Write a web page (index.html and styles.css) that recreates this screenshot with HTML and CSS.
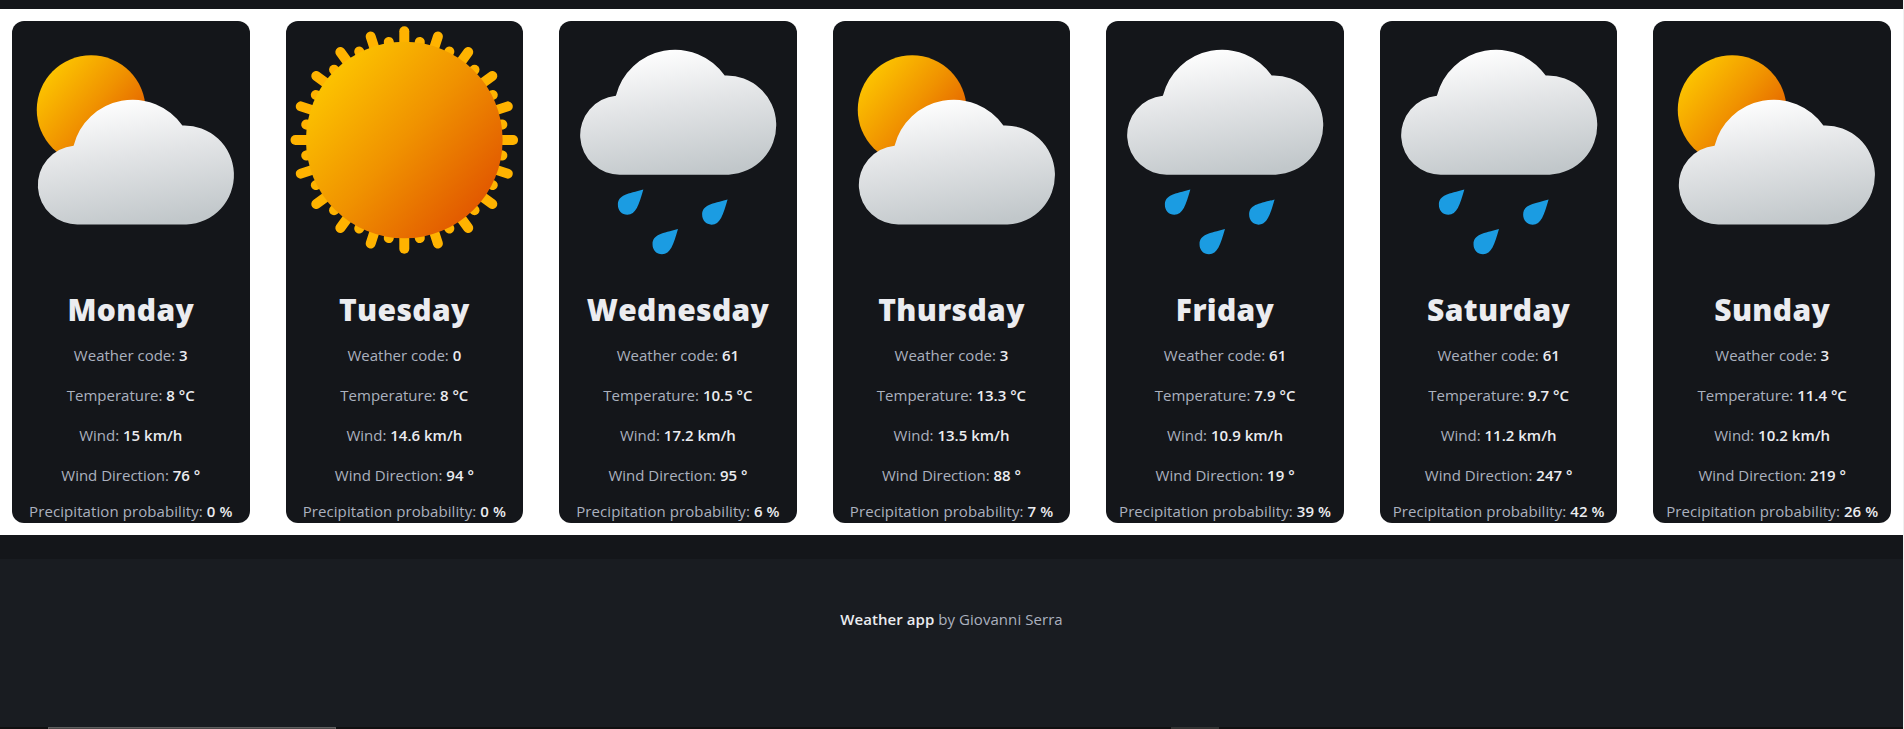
FILE: index.html
```
<!DOCTYPE html>
<html lang="en">
<head>
<meta charset="utf-8">
<title>Weather app</title>
<link rel="stylesheet" href="styles.css">
</head>
<body>
<svg class="defs" aria-hidden="true">
  <defs>
    <linearGradient id="sunFill" x1="0.1" y1="0.2" x2="0.85" y2="0.85"><stop offset="0" stop-color="#fcc200"/><stop offset="0.5" stop-color="#f09200"/><stop offset="1" stop-color="#e25a00"/></linearGradient>
    <linearGradient id="cloudFill" x1="0.35" y1="0" x2="0.6" y2="1"><stop offset="0" stop-color="#ffffff"/><stop offset="0.45" stop-color="#e2e4e6"/><stop offset="1" stop-color="#c1c7ca"/></linearGradient>
    <path id="cloud" fill="url(#cloudFill)" d="M65 203.500A39.600 39.600 0 0 1 60 124.500A61 61 0 0 1 169 104.300A49.600 49.600 0 0 1 173 203.500Z" transform="translate(1.700 0.200)"/>
    <path id="drop" fill="#1b9ce2" d="M84.5 168.500C80 184 77 193.800 68.500 193.800C63 193.800 59 189.500 59 184C59 173.500 69 173 84.500 168.500Z"/>
    <path id="rayLong" d="M0 -109V109"/>
    <path id="rayShort" d="M0 -99.500V99.500"/>
    <symbol id="cloudy" viewBox="0 0 238 238"><circle cx="79.300" cy="88.700" r="54.500" fill="url(#sunFill)"/><use href="#cloud"/></symbol>
    <symbol id="rain" viewBox="0 0 238 238"><use href="#cloud" x="-4.700" y="-50"/><use href="#drop"/><use href="#drop" x="84.400" y="10"/><use href="#drop" x="34.700" y="39.700"/></symbol>
    <symbol id="sunny" viewBox="0 0 238 238">
      <g transform="translate(118.500 119)">
        <g stroke="#ffb300" stroke-width="10" stroke-linecap="round">
          <use href="#rayLong"/><use href="#rayLong" transform="rotate(18)"/><use href="#rayLong" transform="rotate(36)"/><use href="#rayLong" transform="rotate(54)"/><use href="#rayLong" transform="rotate(72)"/><use href="#rayLong" transform="rotate(90)"/><use href="#rayLong" transform="rotate(108)"/><use href="#rayLong" transform="rotate(126)"/><use href="#rayLong" transform="rotate(144)"/><use href="#rayLong" transform="rotate(162)"/>
          <use href="#rayShort" transform="rotate(9)"/><use href="#rayShort" transform="rotate(27)"/><use href="#rayShort" transform="rotate(45)"/><use href="#rayShort" transform="rotate(63)"/><use href="#rayShort" transform="rotate(81)"/><use href="#rayShort" transform="rotate(99)"/><use href="#rayShort" transform="rotate(117)"/><use href="#rayShort" transform="rotate(135)"/><use href="#rayShort" transform="rotate(153)"/><use href="#rayShort" transform="rotate(171)"/>
        </g>
        <circle r="98.500" fill="url(#sunFill)"/>
      </g>
    </symbol>
  </defs>
</svg>
<main class="forecast">
  <article class="card"><svg class="icon"><use href="#cloudy"/></svg><h2 class="day">Monday</h2><p>Weather code: <strong>3</strong></p><p>Temperature: <strong>8 °C</strong></p><p>Wind: <strong>15 km/h</strong></p><p>Wind Direction: <strong>76 °</strong></p><p class="last">Precipitation probability: <strong>0 %</strong></p></article>
  <article class="card"><svg class="icon"><use href="#sunny"/></svg><h2 class="day">Tuesday</h2><p>Weather code: <strong>0</strong></p><p>Temperature: <strong>8 °C</strong></p><p>Wind: <strong>14.6 km/h</strong></p><p>Wind Direction: <strong>94 °</strong></p><p class="last">Precipitation probability: <strong>0 %</strong></p></article>
  <article class="card"><svg class="icon"><use href="#rain"/></svg><h2 class="day">Wednesday</h2><p>Weather code: <strong>61</strong></p><p>Temperature: <strong>10.5 °C</strong></p><p>Wind: <strong>17.2 km/h</strong></p><p>Wind Direction: <strong>95 °</strong></p><p class="last">Precipitation probability: <strong>6 %</strong></p></article>
  <article class="card"><svg class="icon"><use href="#cloudy"/></svg><h2 class="day">Thursday</h2><p>Weather code: <strong>3</strong></p><p>Temperature: <strong>13.3 °C</strong></p><p>Wind: <strong>13.5 km/h</strong></p><p>Wind Direction: <strong>88 °</strong></p><p class="last">Precipitation probability: <strong>7 %</strong></p></article>
  <article class="card"><svg class="icon"><use href="#rain"/></svg><h2 class="day">Friday</h2><p>Weather code: <strong>61</strong></p><p>Temperature: <strong>7.9 °C</strong></p><p>Wind: <strong>10.9 km/h</strong></p><p>Wind Direction: <strong>19 °</strong></p><p class="last">Precipitation probability: <strong>39 %</strong></p></article>
  <article class="card"><svg class="icon"><use href="#rain"/></svg><h2 class="day">Saturday</h2><p>Weather code: <strong>61</strong></p><p>Temperature: <strong>9.7 °C</strong></p><p>Wind: <strong>11.2 km/h</strong></p><p>Wind Direction: <strong>247 °</strong></p><p class="last">Precipitation probability: <strong>42 %</strong></p></article>
  <article class="card"><svg class="icon"><use href="#cloudy"/></svg><h2 class="day">Sunday</h2><p>Weather code: <strong>3</strong></p><p>Temperature: <strong>11.4 °C</strong></p><p>Wind: <strong>10.2 km/h</strong></p><p>Wind Direction: <strong>219 °</strong></p><p class="last">Precipitation probability: <strong>26 %</strong></p></article>
</main>
<footer class="footer"><p><strong>Weather app</strong> by Giovanni Serra</p></footer>
<div class="taskbar"><span class="task task-active"></span><span class="task task-open"></span></div>
</body>
</html>
```
FILE: styles.css
```
* { box-sizing: border-box; }
html { background: #f0f0f0; }
body {
  margin: 0 1px 0 0;
  height: 729px;
  padding-top: 9px;
  overflow: hidden;
  display: flex;
  flex-direction: column;
  background: #14161a;
  color: #abb1bf;
  font: 15px/24px "Open Sans", "Noto Sans", sans-serif;
}
.defs { position: absolute; width: 0; height: 0; }
p, h2 { margin: 0; white-space: nowrap; }
strong { color: #ebecf0; font-weight: 600; }
.forecast {
  height: 526px;
  padding: 12px;
  display: grid;
  grid-template-columns: repeat(7, minmax(0, 1fr));
  gap: 36px;
  background: #fff;
}
.card {
  height: 502px;
  display: flex;
  flex-direction: column;
  align-items: center;
  overflow: hidden;
  border-radius: 12px;
  background: #14161a;
}
.icon { display: block; width: 100%; height: 238px; flex: none; }
.day {
  margin: 33px 0 15px;
  color: #ebecf0;
  font-size: 30px;
  font-weight: 800;
  line-height: 36px;
  letter-spacing: 0.35px;
}
.card p { margin-bottom: 16px; }
.card p:nth-last-child(2) { margin-bottom: 12px; }
.card .last { margin-bottom: 0; letter-spacing: 0.08px; }
.footer {
  margin-top: 24px;
  height: 168px;
  padding-top: 48px;
  text-align: center;
  background: #191c21;
}
.footer p { letter-spacing: 0.06px; }
.taskbar {
  height: 2px;
  padding-left: 48px;
  display: flex;
  gap: 835px;
  background: #101011;
}
.task { height: 2px; }
.task-active { width: 288px; background: #484848; border: 1px solid #5f5f5f; border-bottom: 0; }
.task-open { width: 48px; background: #333; }
```
